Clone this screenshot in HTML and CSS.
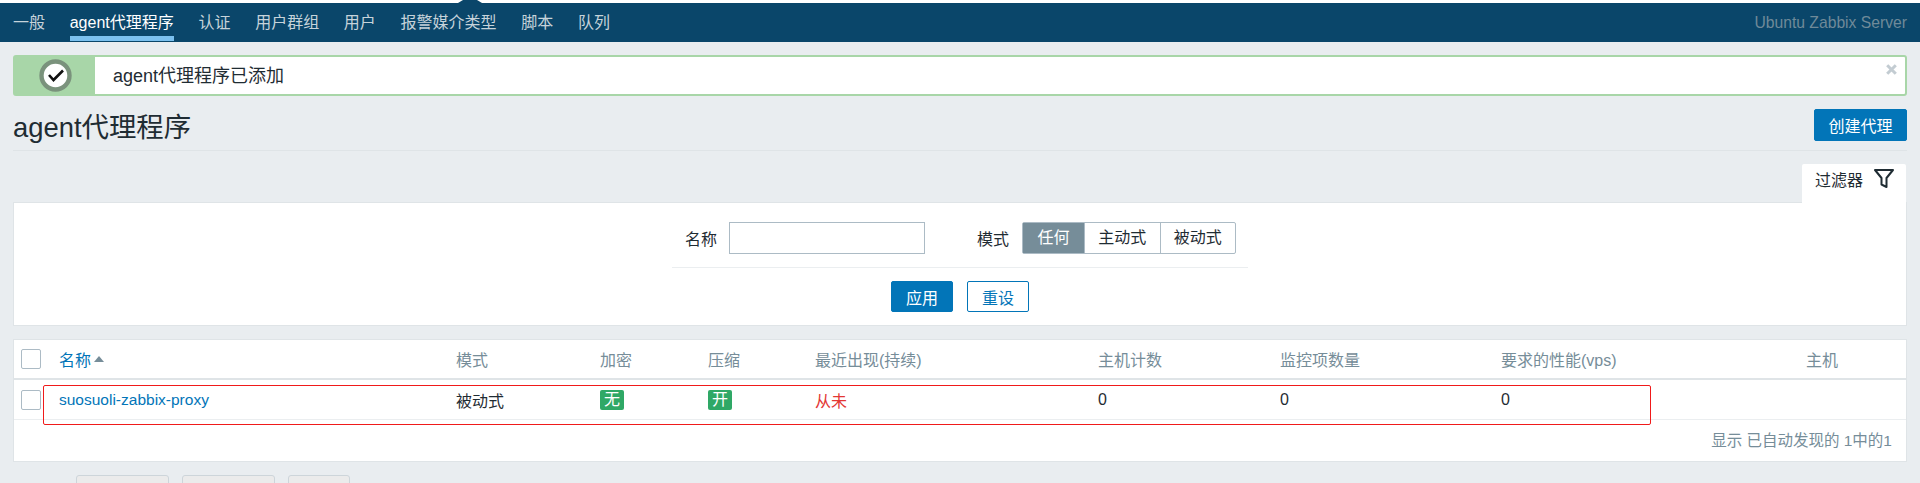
FILE: index.html
```html
<!DOCTYPE html>
<html lang="zh-CN">

<head>
  <meta charset="UTF-8">
  <title>agent代理程序</title>
  <link rel="stylesheet" href="styles.css">
</head>

<body>
  <header class="topbar">
    <nav class="topnav">
      <a href="#">一般</a>
      <a href="#" class="current">agent代理程序</a>
      <a href="#">认证</a>
      <a href="#">用户群组</a>
      <a href="#">用户</a>
      <a href="#">报警媒介类型</a>
      <a href="#">脚本</a>
      <a href="#">队列</a>
    </nav>
    <span class="server-name">Ubuntu Zabbix Server</span>
  </header>

  <main class="page">
    <div class="message">
      <div class="message-icon">
        <svg width="33" height="33" viewBox="0 0 33 33">
          <circle cx="16.5" cy="16.5" r="14" fill="#fff" stroke="#7a927c" stroke-width="4.4" />
          <path d="M10 16l4.5 5 9.5-9.5" fill="none" stroke="#111" stroke-width="2.6" />
        </svg>
      </div>
      <div class="message-text">agent代理程序已添加</div>
      <svg class="message-close" width="11" height="11" viewBox="0 0 11 11">
        <path d="M1.2 1.2l8.6 8.6M9.8 1.2l-8.6 8.6" stroke="#c3ccd2" stroke-width="3" />
      </svg>
    </div>

    <div class="title-row">
      <h1>agent代理程序</h1>
      <button class="btn btn-primary btn-create">创建代理</button>
    </div>

    <div class="filter-tabs">
      <div class="filter-tab">
        <span>过滤器</span>
        <svg width="20" height="19" viewBox="0 0 20 19">
          <path d="M1 1h18l-6.5 8v9l-5-2.5v-6.5z" fill="none" stroke="#1f2c33" stroke-width="2" stroke-linejoin="round" />
        </svg>
      </div>
    </div>

    <section class="filter">
      <div class="filter-fields">
        <label class="field-label">名称</label>
        <input class="field-input" type="text">
        <label class="field-label field-label-mode">模式</label>
        <div class="segments">
          <span class="segment selected">任何</span>
          <span class="segment">主动式</span>
          <span class="segment">被动式</span>
        </div>
      </div>
      <div class="filter-actions">
        <button class="btn btn-primary">应用</button>
        <button class="btn btn-outline">重设</button>
      </div>
    </section>

    <section class="list">
      <div class="list-row list-head">
        <span><i class="check"></i></span>
        <span class="sorted"><a href="#">名称</a><i class="sort-arrow"></i></span>
        <span>模式</span>
        <span>加密</span>
        <span>压缩</span>
        <span>最近出现(持续)</span>
        <span>主机计数</span>
        <span>监控项数量</span>
        <span>要求的性能(vps)</span>
        <span>主机</span>
      </div>
      <div class="list-row list-item">
        <span><i class="check"></i></span>
        <span><a href="#" class="proxy-name">suosuoli-zabbix-proxy</a></span>
        <span>被动式</span>
        <span><b class="tag">无</b></span>
        <span><b class="tag">开</b></span>
        <span class="never">从未</span>
        <span>0</span>
        <span>0</span>
        <span>0</span>
        <span></span>
      </div>
      <div class="list-foot">显示 已自动发现的 1中的1</div>
      <div class="highlight"></div>
    </section>

    <div class="mass-actions">
      <button class="btn-mass btn-mass-wide"></button>
      <button class="btn-mass btn-mass-wide"></button>
      <button class="btn-mass"></button>
    </div>
  </main>
</body>

</html>
```

FILE: styles.css
```css
:root {
  font-family: "Liberation Sans", "Noto Sans CJK SC", sans-serif;
}

body {
  background-color: #e9edf0;
  color: #1f2c33;
  font-size: 16px;
  margin: 0;
  height: 483px;
  overflow: hidden;
}

a {
  color: #0275b8;
  text-decoration: none;
}

button {
  font-family: inherit;
  font-size: 16px;
}

/* top bar */
.topbar {
  position: relative;
  display: flex;
  justify-content: space-between;
  align-items: center;
  height: 39px;
  border-top: 3px solid #fff;
  background-color: #0a466a;
  padding: 0 13px;
}

.topbar::before {
  content: "";
  position: absolute;
  left: 458px;
  top: -3px;
  width: 24px;
  height: 3px;
  background-color: #0a466a;
  clip-path: polygon(5px 0, 19px 0, 24px 100%, 0 100%);
}

.topnav {
  display: flex;
  gap: 24.7px;
  height: 100%;
}

.topnav a {
  color: #c6d3da;
  height: 33px;
  border-bottom: 5px solid transparent;
  margin-bottom: 1px;
  line-height: 40px;
  white-space: nowrap;
}

.topnav a.current {
  color: #fff;
  border-bottom-color: #7bc0ee;
}

.server-name {
  color: #6f8a99;
  font-size: 15.7px;
}

/* page */
.page {
  padding: 13px 13px 0;
}

.message {
  position: relative;
  display: flex;
  height: 41px;
  box-sizing: border-box;
  border: 2px solid #a8d6a8;
  border-radius: 3px;
  background-color: #fff;
}

.message-icon {
  display: flex;
  align-items: center;
  justify-content: center;
  width: 80px;
  background-color: #a8d6a8;
}

.message-text {
  font-size: 18px;
  line-height: 39px;
  padding-left: 18px;
}

.message-close {
  position: absolute;
  right: 8px;
  top: 7px;
}

.title-row {
  display: flex;
  justify-content: space-between;
  align-items: center;
  height: 54px;
  border-bottom: 1px solid #dfe4e7;
}

.title-row h1 {
  font-size: 27.4px;
  font-weight: 400;
  margin: 4px 0 0;
}

.btn {
  box-sizing: border-box;
  width: 62px;
  height: 31px;
  padding: 0;
  border-radius: 2px;
  cursor: pointer;
}

.btn-primary {
  background-color: #0275b8;
  border: 1px solid #0275b8;
  color: #fff;
}

.btn-outline {
  background-color: #fff;
  border: 1px solid #0275b8;
  color: #0275b8;
}

.btn-create {
  width: 93px;
  height: 32px;
  margin-top: 4px;
}

/* filter */
.filter-tabs {
  display: flex;
  justify-content: flex-end;
  margin-top: 13px;
  padding-right: 1px;
}

.filter-tab {
  display: flex;
  justify-content: space-between;
  box-sizing: border-box;
  width: 104px;
  height: 39px;
  padding: 5px 12px 0 13px;
  background-color: #fff;
  border-radius: 2px 2px 0 0;
  margin-bottom: -1px;
  position: relative;
}

.filter-tab span {
  line-height: 24px;
}

.filter {
  box-sizing: border-box;
  height: 124px;
  background-color: #fff;
  border: 1px solid #dfe4e7;
  padding-top: 19px;
}

.filter-fields {
  display: flex;
  align-items: center;
  box-sizing: border-box;
  width: 576px;
  height: 46px;
  margin-left: 658px;
  padding: 0 0 13px 13px;
  border-bottom: 1px solid #ebeef0;
}

.field-label-mode {
  margin-left: 52px;
}

.field-input {
  box-sizing: border-box;
  width: 196px;
  height: 32px;
  margin-left: 12px;
  border: 1px solid #acbbc5;
  border-radius: 0;
  background-color: #fff;
}

.segments {
  display: flex;
  margin-left: 13px;
  height: 32px;
  box-sizing: border-box;
  border: 1px solid #acbbc5;
  border-radius: 2px;
}

.segment {
  line-height: 30px;
  width: 74.5px;
  text-align: center;
  border-left: 1px solid #acbbc5;
}

.segment.selected {
  width: 61px;
  background-color: #768d99;
  border-left: none;
  color: #fff;
}

.filter-actions {
  display: flex;
  justify-content: center;
  gap: 14px;
  margin-top: 13px;
}

/* list */
.list {
  position: relative;
  box-sizing: border-box;
  height: 123px;
  margin-top: 13px;
  background-color: #fff;
  border: 1px solid #dfe4e7;
}

.list-row {
  display: grid;
  grid-template-columns: 45px 397px 144px 108px 107px 283px 182px 221px 305px 1fr;
  align-items: center;
}

.list-head {
  height: 38px;
  border-bottom: 2px solid #dfe4e7;
  color: #768d99;
}

.list-item {
  height: 39px;
  border-bottom: 1px solid #ebeef0;
}

.proxy-name {
  font-size: 15.5px;
}

.check {
  display: block;
  box-sizing: border-box;
  width: 20px;
  height: 20px;
  margin-left: 7px;
  border: 1px solid #acbbc5;
  border-radius: 2px;
  background-color: #fff;
}

.sorted {
  display: flex;
  align-items: center;
}

.sort-arrow {
  width: 0;
  height: 0;
  margin-left: 3px;
  border-left: 5px solid transparent;
  border-right: 5px solid transparent;
  border-bottom: 6px solid #768d99;
}

.tag {
  display: block;
  width: 24px;
  height: 20px;
  line-height: 20px;
  text-align: center;
  font-weight: 400;
  color: #fff;
  background-color: #2fa866;
  border-radius: 2px;
}

.never {
  color: #e33734;
}

.list-foot {
  text-align: right;
  color: #768d99;
  font-size: 15.5px;
  line-height: 41px;
  padding-right: 14px;
}

.highlight {
  position: absolute;
  left: 29px;
  top: 45px;
  width: 1608px;
  height: 40px;
  box-sizing: border-box;
  border: 1.5px solid #f01a1a;
  border-radius: 2px;
}

/* mass actions under the list */
.mass-actions {
  display: flex;
  gap: 13px;
  margin: 13px 0 0 63px;
}

.btn-mass {
  box-sizing: border-box;
  width: 62px;
  height: 30px;
  background-color: #ebebeb;
  border: 1px solid #cdd5da;
  border-radius: 3px;
}

.btn-mass-wide {
  width: 93px;
}
```
